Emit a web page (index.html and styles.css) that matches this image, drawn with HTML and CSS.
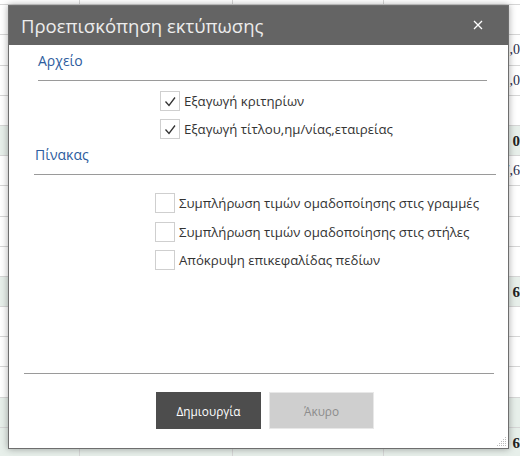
FILE: index.html
```html
<!DOCTYPE html>
<html lang="el">
<head>
<meta charset="utf-8">
<title>Προεπισκόπηση εκτύπωσης</title>
<link rel="stylesheet" href="styles.css">
</head>
<body>
<div class="sheet">
  <div class="row"><span class="c1"></span><span class="c2"></span><span class="c3"></span><span class="c4"></span></div>
  <div class="row"><span class="c1"></span><span class="c2"></span><span class="c3"></span><span class="c4"></span></div>
  <div class="row"><span class="c1"></span><span class="c2"></span><span class="c3"></span><span class="c4">1,0</span></div>
  <div class="row"><span class="c1"></span><span class="c2"></span><span class="c3"></span><span class="c4">1,0</span></div>
  <div class="row"><span class="c1"></span><span class="c2"></span><span class="c3"></span><span class="c4"></span></div>
  <div class="row total"><span class="c1"></span><span class="c2"></span><span class="c3"></span><span class="c4">0</span></div>
  <div class="row"><span class="c1"></span><span class="c2"></span><span class="c3"></span><span class="c4">7,6</span></div>
  <div class="row"><span class="c1"></span><span class="c2"></span><span class="c3"></span><span class="c4"></span></div>
  <div class="row"><span class="c1"></span><span class="c2"></span><span class="c3"></span><span class="c4"></span></div>
  <div class="row"><span class="c1"></span><span class="c2"></span><span class="c3"></span><span class="c4"></span></div>
  <div class="row total"><span class="c1"></span><span class="c2"></span><span class="c3"></span><span class="c4">6</span></div>
  <div class="row"><span class="c1"></span><span class="c2"></span><span class="c3"></span><span class="c4"></span></div>
  <div class="row"><span class="c1"></span><span class="c2"></span><span class="c3"></span><span class="c4"></span></div>
  <div class="row"><span class="c1"></span><span class="c2"></span><span class="c3"></span><span class="c4"></span></div>
  <div class="row shade"><span class="c1"></span><span class="c2"></span><span class="c3"></span><span class="c4"></span></div>
  <div class="row total"><span class="c1"></span><span class="c2"></span><span class="c3"></span><span class="c4">6</span></div>
</div>

<div class="dialog">
  <div class="titlebar">
    <span class="title">Προεπισκόπηση εκτύπωσης</span>
    <svg class="close" width="10" height="10" viewBox="0 0 10 10"><path d="M1 1 L9 9 M9 1 L1 9" stroke="#fff" stroke-width="1.3" fill="none"/></svg>
  </div>
  <div class="content">
    <div class="section sec-file">
      <div class="heading">Αρχείο</div>
      <div class="options">
        <label class="opt"><span class="box"><svg width="20" height="20" viewBox="0 0 20 20"><path d="M5.5 10.5 L9 14.5 L15 6.5" stroke="#333" stroke-width="1.3" fill="none"/></svg></span><span class="lbl">Εξαγωγή κριτηρίων</span></label>
        <label class="opt"><span class="box"><svg width="20" height="20" viewBox="0 0 20 20"><path d="M5.5 10.5 L9 14.5 L15 6.5" stroke="#333" stroke-width="1.3" fill="none"/></svg></span><span class="lbl">Εξαγωγή τίτλου,ημ/νίας,εταιρείας</span></label>
      </div>
    </div>
    <div class="section sec-table">
      <div class="heading">Πίνακας</div>
      <div class="options">
        <label class="opt"><span class="box"></span><span class="lbl">Συμπλήρωση τιμών ομαδοποίησης στις γραμμές</span></label>
        <label class="opt"><span class="box"></span><span class="lbl">Συμπλήρωση τιμών ομαδοποίησης στις στήλες</span></label>
        <label class="opt"><span class="box"></span><span class="lbl">Απόκρυψη επικεφαλίδας πεδίων</span></label>
      </div>
    </div>
  </div>
  <div class="footer">
    <div class="buttons">
      <button class="btn primary">Δημιουργία</button>
      <button class="btn secondary">Άκυρο</button>
    </div>
  </div>
  <svg class="grip" width="10" height="10" viewBox="0 0 10 10">
    <g fill="#bbb"><rect x="8" y="0" width="1" height="1"/><rect x="6" y="2" width="1" height="1"/><rect x="8" y="2" width="1" height="1"/><rect x="4" y="4" width="1" height="1"/><rect x="6" y="4" width="1" height="1"/><rect x="8" y="4" width="1" height="1"/><rect x="2" y="6" width="1" height="1"/><rect x="4" y="6" width="1" height="1"/><rect x="6" y="6" width="1" height="1"/><rect x="8" y="6" width="1" height="1"/><rect x="0" y="8" width="1" height="1"/><rect x="2" y="8" width="1" height="1"/><rect x="4" y="8" width="1" height="1"/><rect x="6" y="8" width="1" height="1"/><rect x="8" y="8" width="1" height="1"/></g>
  </svg>
</div>
</body>
</html>
```

FILE: styles.css
```css
html, body {
  margin: 0;
  padding: 0;
}
body {
  width: 520px;
  height: 456px;
  overflow: hidden;
  position: relative;
  background: #fff;
  font-family: "Open Sans", "Noto Sans", "DejaVu Sans", sans-serif;
}

/* background spreadsheet */
.sheet {
  margin-top: -25px;
  width: 540px;
}
.row {
  display: flex;
  height: 30.2px;
  box-sizing: border-box;
  border-bottom: 1px solid #d6d6d6;
}
.row.total, .row.shade {
  background: #e7efea;
}
.row span {
  box-sizing: border-box;
  border-right: 1px solid #d6d6d6;
  height: 100%;
}
.c1 { width: 80px; }
.c2 { width: 153px; }
.c3 { width: 151px; }
.c4 {
  width: 137px;
  text-align: right;
  font-family: "Liberation Serif", serif;
  font-size: 14px;
  color: #1f2b4a;
  line-height: 30px;
  padding-right: 0;
}
.row.total .c4 {
  font-weight: bold;
  color: #222;
  font-size: 15px;
}

/* dialog */
.dialog {
  position: absolute;
  left: 8px;
  top: 5px;
  width: 501px;
  height: 444px;
  box-sizing: border-box;
  border: 1px solid #6e6e6e;
  background: #fff;
  box-shadow: 0 0 7px rgba(0, 0, 0, 0.35);
  display: flex;
  flex-direction: column;
}
.titlebar {
  height: 39px;
  background: #646464;
  display: flex;
  align-items: center;
  justify-content: space-between;
  padding: 0 25px 0 12px;
  flex-shrink: 0;
}
.title {
  color: #ececec;
  font-size: 18.5px;
}
.close {
  display: block;
  margin-top: -2px;
}
.content {
  flex: 1;
  padding-top: 6px;
}
.heading {
  color: #2d5c9e;
  font-size: 14px;
  line-height: 20px;
  padding-bottom: 9px;
  border-bottom: 1px solid #9a9a9a;
}
.sec-file {
  margin: 0 21px 0 29px;
}
.sec-table {
  margin: 6px 12px 0 25px;
}
.sec-table .heading { padding-left: 1px; }
.options {
  display: flex;
  flex-direction: column;
  gap: 8px;
}
.sec-file .options {
  margin-top: 10px;
  padding-left: 122px;
}
.sec-table .options {
  margin-top: 18px;
  padding-left: 121px;
  gap: 8.5px;
}
.opt {
  display: flex;
  align-items: center;
  height: 20px;
}
.box {
  width: 20px;
  height: 20px;
  box-sizing: border-box;
  border: 1px solid #cfcfcf;
  background: #fff;
  flex-shrink: 0;
  position: relative;
}
.box svg {
  position: absolute;
  left: -1px;
  top: -1px;
}
.lbl {
  margin-left: 4px;
  font-size: 13.2px;
  color: #333;
  white-space: nowrap;
}
.footer {
  margin: 0 14px 0 15px;
  border-top: 1px solid #9a9a9a;
  padding: 18px 0 19px;
}
.buttons {
  display: flex;
  gap: 8px;
  padding-left: 132px;
}
.btn {
  width: 105px;
  height: 37px;
  box-sizing: border-box;
  font-family: "Open Sans", "Noto Sans", sans-serif;
  font-size: 11.8px;
  border: 0;
  padding: 0;
}
.btn.primary {
  background: #4d4d4d;
  color: #fff;
}
.btn.secondary {
  background: #cfcfcf;
  border: 1px solid #e8e8e8;
  color: #8c8c8c;
}
.grip {
  position: absolute;
  right: 1px;
  bottom: 1px;
}
```
